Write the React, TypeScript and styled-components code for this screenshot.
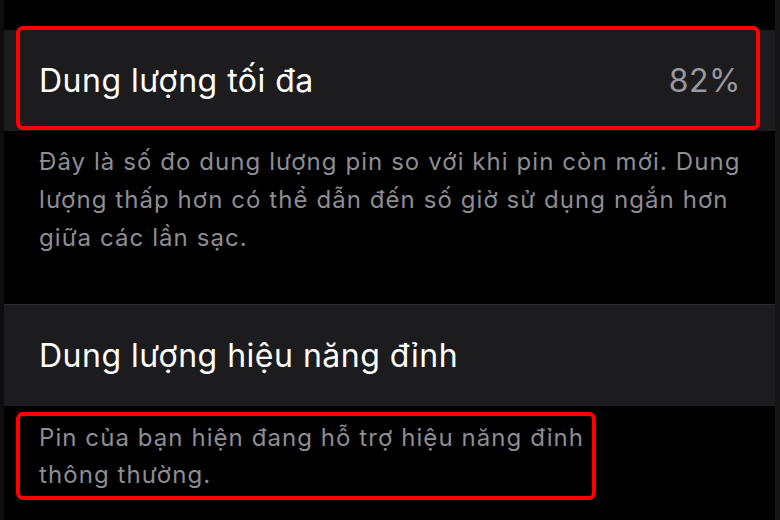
import React from "react";
import styled, { createGlobalStyle } from "styled-components";

const GlobalStyle = createGlobalStyle`
  html, body { margin: 0; padding: 0; background: #000; }
  body { font-family: Inter, "Noto Sans", "DejaVu Sans", sans-serif; -webkit-font-smoothing: antialiased; }
`;

const Screen = styled.div`
  width: 780px;
  height: 520px;
  box-sizing: border-box;
  background: #000;
  border-left: 4px solid #0e0e0e;
  border-right: 5px solid #151515;
  padding-top: 30px;
  display: flex;
  flex-direction: column;
  overflow: hidden;
`;

const Cell = styled.div<{ $height: number; $divider?: boolean }>`
  position: relative;
  height: ${(p) => p.$height}px;
  box-sizing: border-box;
  background: #1c1c1e;
  border-top: ${(p) => (p.$divider ? "1px solid #2a2a2c" : "none")};
  padding: 0 34px 0 35px;
  display: flex;
  align-items: center;
  justify-content: space-between;
`;

const Title = styled.span`
  color: #ffffff;
  font-size: 32px;
  letter-spacing: 0.5px;
`;

const Value = styled.span`
  color: #98989e;
  font-size: 32px;
  letter-spacing: 0.5px;
`;

const Footer = styled.div<{ $pt: number; $height: number; $lh: number }>`
  position: relative;
  height: ${(p) => p.$height}px;
  box-sizing: border-box;
  padding: ${(p) => p.$pt}px 20px 0 35px;
  color: #8d8d93;
  font-size: 24px;
  line-height: ${(p) => p.$lh}px;
  letter-spacing: 1.07px;
  white-space: nowrap;
`;

const Highlight = styled.div<{ $top: number; $left: number; $w: number; $h: number }>`
  position: absolute;
  top: ${(p) => p.$top}px;
  left: ${(p) => p.$left}px;
  width: ${(p) => p.$w}px;
  height: ${(p) => p.$h}px;
  box-sizing: border-box;
  border: 4px solid #ff0000;
  border-radius: 7px;
  pointer-events: none;
`;

export default function App() {
  return (
    <>
      <GlobalStyle />
      <Screen>
        <Cell $height={101}>
          <Title>Dung lượng tối đa</Title>
          <Value>82%</Value>
          <Highlight $top={-4} $left={12} $w={744} $h={104} />
        </Cell>
        <Footer $pt={12} $height={173} $lh={38}>
          Đây là số đo dung lượng pin so với khi pin còn mới. Dung
          <br />
          lượng thấp hơn có thể dẫn đến số giờ sử dụng ngắn hơn
          <br />
          giữa các lần sạc.
        </Footer>
        <Cell $height={102} $divider>
          <Title>Dung lượng hiệu năng đỉnh</Title>
        </Cell>
        <Footer $pt={13} $height={114} $lh={37}>
          Pin của bạn hiện đang hỗ trợ hiệu năng đỉnh
          <br />
          thông thường.
          <Highlight $top={6} $left={12} $w={580} $h={88} />
        </Footer>
      </Screen>
    </>
  );
}
